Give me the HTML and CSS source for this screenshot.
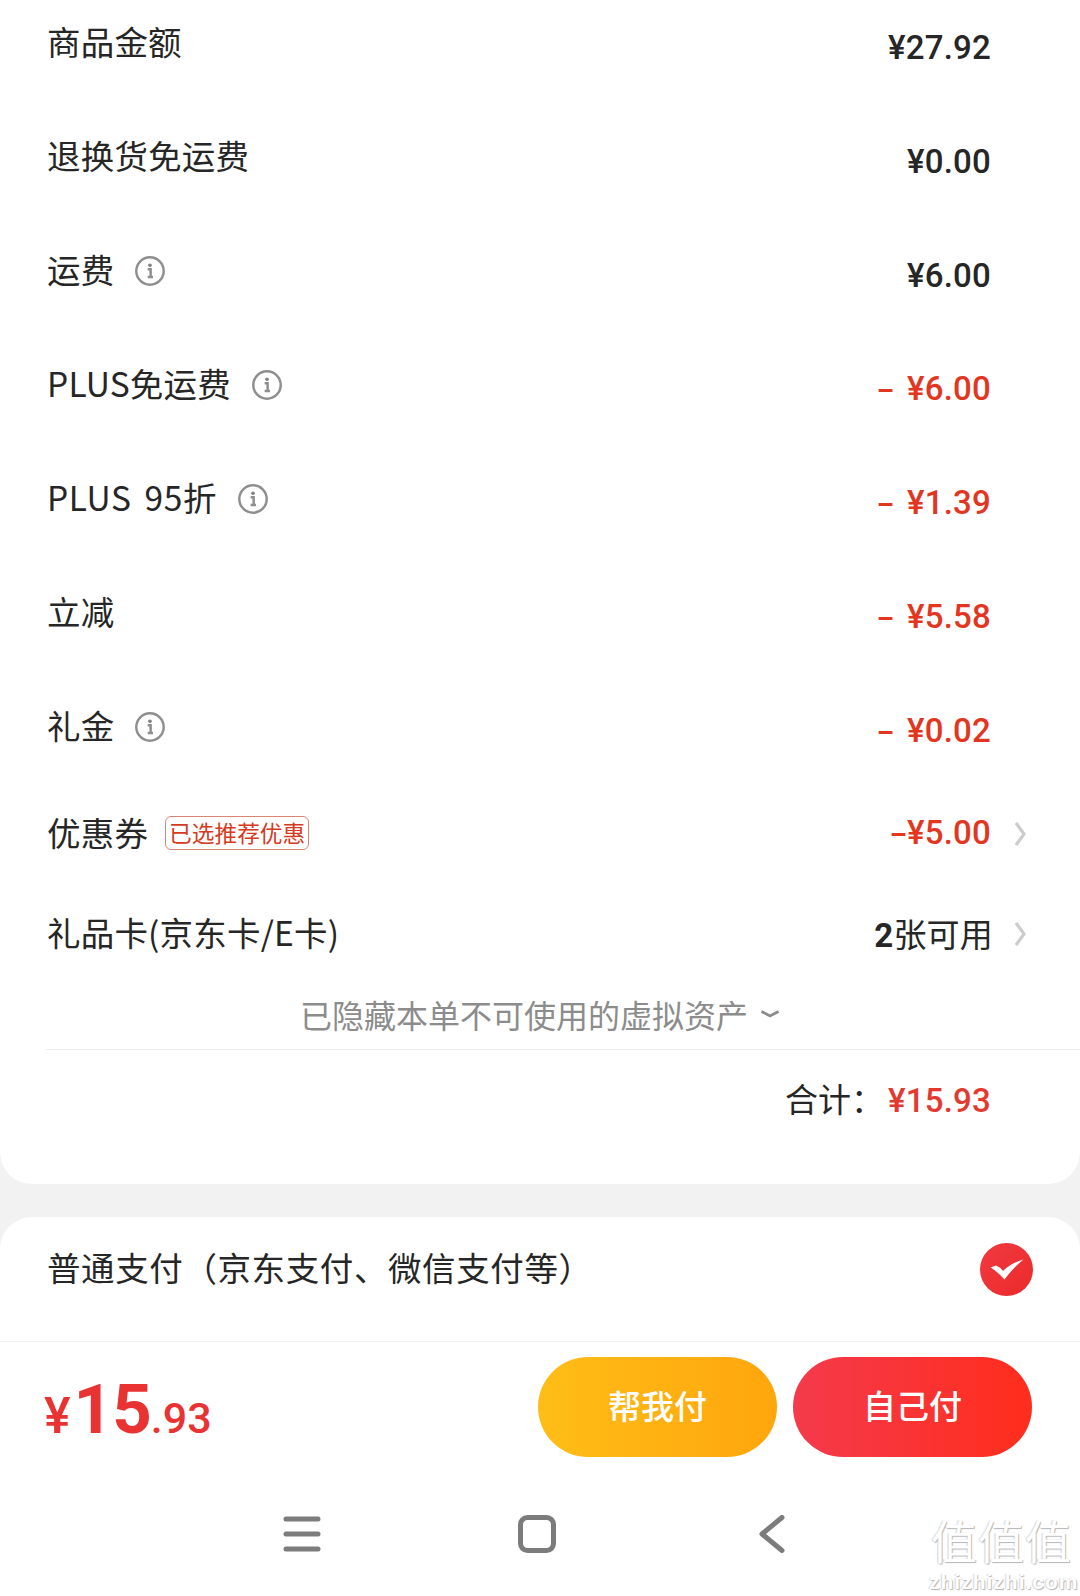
FILE: index.html
```html
<!DOCTYPE html>
<html lang="zh-CN">
  <head>
    <meta charset="UTF-8" />
    <meta name="viewport" content="width=device-width, initial-scale=1.0" />
    <title>订单金额</title>
    <link rel="stylesheet" href="styles.css">
  </head>
  <body>
    <section class="card summary">
      <div class="row"><span class="label">商品金额</span><span class="amount">¥27.92</span></div>
      <div class="row"><span class="label">退换货免运费</span><span class="amount">¥0.00</span></div>
      <div class="row">
        <span class="label">运费</span>
        <svg class="info" viewBox="0 0 28 28"><circle cx="14" cy="14" r="12.8"/><circle class="dot" cx="14" cy="8.6" r="1.7"/><path d="M11.8 12.4h2.8v7M11.8 19.6h5"/></svg>
        <span class="amount">¥6.00</span>
      </div>
      <div class="row">
        <span class="label">PLUS免运费</span>
        <svg class="info" viewBox="0 0 28 28"><circle cx="14" cy="14" r="12.8"/><circle class="dot" cx="14" cy="8.6" r="1.7"/><path d="M11.8 12.4h2.8v7M11.8 19.6h5"/></svg>
        <span class="amount red"><span class="minus">–</span>¥6.00</span>
      </div>
      <div class="row">
        <span class="label wide">PLUS 95折</span>
        <svg class="info" viewBox="0 0 28 28"><circle cx="14" cy="14" r="12.8"/><circle class="dot" cx="14" cy="8.6" r="1.7"/><path d="M11.8 12.4h2.8v7M11.8 19.6h5"/></svg>
        <span class="amount red"><span class="minus">–</span>¥1.39</span>
      </div>
      <div class="row"><span class="label">立减</span><span class="amount red"><span class="minus">–</span>¥5.58</span></div>
      <div class="row">
        <span class="label">礼金</span>
        <svg class="info" viewBox="0 0 28 28"><circle cx="14" cy="14" r="12.8"/><circle class="dot" cx="14" cy="8.6" r="1.7"/><path d="M11.8 12.4h2.8v7M11.8 19.6h5"/></svg>
        <span class="amount red"><span class="minus">–</span>¥0.02</span>
      </div>
      <div class="row row-link coupon">
        <span class="label">优惠券</span>
        <span class="tag">已选推荐优惠</span>
        <span class="amount red flat"><span class="minus tight">–</span>¥5.00</span>
        <svg class="chevron" viewBox="0 0 12 26"><path d="M2 2 10 13 2 24"/></svg>
      </div>
      <div class="row row-link gift">
        <span class="label">礼品卡(京东卡/E卡)</span>
        <span class="amount flat"><b>2</b><span class="plain">张可用</span></span>
        <svg class="chevron" viewBox="0 0 12 26"><path d="M2 2 10 13 2 24"/></svg>
      </div>
      <div class="hidden-note">
        已隐藏本单不可使用的虚拟资产
        <svg class="caret" viewBox="0 0 20 8"><path d="M1.500 1.500 10 6l8.500-4.500"/></svg>
      </div>
      <div class="total">
        <span class="total-label">合计：</span><span class="amount red flat">¥15.93</span>
      </div>
    </section>

    <section class="card pay">
      <span class="label pay-label">普通支付（京东支付、微信支付等）</span>
      <svg class="check" viewBox="0 0 53 53">
        <defs>
          <linearGradient id="checkFill" x1="0" y1="0" x2="1" y2="1">
            <stop offset="0" stop-color="#f03a40"/>
            <stop offset="1" stop-color="#ec2a2a"/>
          </linearGradient>
        </defs>
        <circle cx="26.500" cy="26.500" r="26.500" fill="url(#checkFill)"/>
        <path d="M10.500 24.500 16 22.500Q20 24 23 28 31 20 43.500 16.500 33 25 24.500 36.500 18 29 10.500 24.500Z" fill="#fff"/>
      </svg>
    </section>

    <footer class="bar">
      <div class="price"><span class="yen">¥</span><span class="whole">15</span><span class="cents">.93</span></div>
      <div class="actions">
        <button class="btn btn-help">帮我付</button>
        <button class="btn btn-self">自己付</button>
      </div>
    </footer>

    <nav class="nav">
      <svg class="nav-icon" viewBox="0 0 38 36"><path d="M3 3h32M3 18h32M3 33h32"/></svg>
      <svg class="nav-icon" viewBox="0 0 38 38"><rect x="2.500" y="2.500" width="33" height="33" rx="7"/></svg>
      <svg class="nav-icon" viewBox="0 0 26 38"><path d="M23 2.500 3 19l20 16.500"/></svg>
    </nav>

    <div class="watermark">
      <div class="wm-mark">值值值</div>
      <div class="wm-url">zhizhizhi.com</div>
    </div>
  </body>
</html>
```

FILE: styles.css
```css
html,
body {
  margin: 0;
  height: 1596px;
  overflow: hidden;
}
body {
  position: relative;
  display: flex;
  flex-direction: column;
  background-color: #f2f2f2;
  color: #262626;
  font-family: "Noto Sans CJK SC", Roboto, sans-serif;
}
svg {
  display: block;
  flex-shrink: 0;
}
.card {
  background-color: #fff;
}
.summary {
  margin-top: -14px;
  padding-bottom: 34px;
  border-radius: 0 0 32px 32px;
}
.row {
  display: flex;
  align-items: center;
  height: 114px;
  padding: 0 89px 0 47px;
}
.label {
  margin-bottom: 4px;
  font-size: 33.5px;
  letter-spacing: 0.2px;
  line-height: 40px;
  white-space: nowrap;
}
.label.wide {
  word-spacing: 5px;
  letter-spacing: 0.6px;
}
.info {
  width: 30px;
  height: 30px;
  margin-left: 21px;
  fill: none;
  stroke: #8f8f8f;
  stroke-width: 2.3;
}
.info .dot {
  fill: #808080;
  stroke: none;
}
.amount {
  margin-left: auto;
  padding-top: 10px;
  font-family: Roboto, "Noto Sans CJK SC", sans-serif;
  font-size: 33px;
  font-weight: 500;
  letter-spacing: 0.2px;
  line-height: 40px;
  white-space: nowrap;
}
.amount.flat {
  padding-top: 0;
}
.red {
  color: #e2361f;
}
.minus {
  margin-right: 13px;
  font-size: 27px;
  font-weight: 700;
}
.minus.tight {
  margin-right: 0;
}
.plain {
  font-family: "Noto Sans CJK SC", sans-serif;
  font-weight: 400;
}
.amount b {
  font-weight: 700;
}
.row-link {
  padding-right: 54px;
}
.coupon {
  height: 100px;
}
.gift {
  box-sizing: border-box;
  height: 102px;
  padding-bottom: 2px;
}
.row-link .amount {
  margin-right: 23px;
}
.gift .amount {
  margin-right: 21px;
}
.tag {
  margin: 0 0 2px 17px;
  padding: 0 3px;
  border: 1px solid #d98576;
  border-radius: 6px;
  color: #d63a22;
  font-size: 22.7px;
  line-height: 32px;
}
.chevron {
  width: 12px;
  height: 26px;
  fill: none;
  stroke: #cdcdcd;
  stroke-width: 3.2;
}
.hidden-note {
  display: flex;
  align-items: center;
  justify-content: center;
  gap: 12px;
  box-sizing: border-box;
  height: 64px;
  margin-left: 46px;
  padding: 0 46px 8px 0;
  border-bottom: 1px solid #ececec;
  color: #8c8c8c;
  font-size: 32px;
  line-height: 40px;
}
.caret {
  width: 20px;
  height: 8px;
  fill: none;
  stroke: #8c8c8c;
  stroke-width: 2.8;
}
.total {
  display: flex;
  align-items: center;
  justify-content: flex-end;
  height: 100px;
  padding-right: 89px;
}
.total-label {
  margin: 0 4px 4px 0;
  font-size: 33px;
  line-height: 40px;
}
.total .amount {
  margin: 2px 0 0;
  color: #e4392e;
}
.pay {
  display: flex;
  align-items: center;
  justify-content: space-between;
  box-sizing: border-box;
  height: 124px;
  margin-top: 33px;
  padding: 0 47px 20px 47px;
  border-radius: 32px 32px 0 0;
}
.pay-label {
  letter-spacing: 0.6px;
}
.check {
  width: 53px;
  height: 53px;
}
.bar {
  display: flex;
  align-items: center;
  justify-content: space-between;
  box-sizing: border-box;
  height: 131px;
  padding: 0 48px 0 44px;
  border-top: 1px solid #f2f2f2;
  background-color: #fff;
}
.price {
  display: flex;
  align-items: baseline;
  padding-top: 4px;
  color: #e93232;
  font-family: Roboto, sans-serif;
  font-weight: 500;
}
.yen {
  margin-right: 3px;
  font-size: 50px;
}
.whole {
  font-size: 69px;
  font-weight: 700;
  letter-spacing: -1px;
}
.cents {
  font-size: 43px;
}
.actions {
  display: flex;
  gap: 16px;
}
.btn {
  width: 239px;
  height: 100px;
  padding-bottom: 6px;
  border: none;
  border-radius: 50px;
  color: #fff;
  font-family: "Noto Sans CJK SC", sans-serif;
  font-size: 33px;
  font-weight: 500;
  cursor: pointer;
}
.btn-help {
  background: linear-gradient(90deg, #ffbd17, #ffa60d);
}
.btn-self {
  background: linear-gradient(90deg, #f43a4c, #ff2d1c);
}
.nav {
  display: flex;
  flex: 1;
  align-items: center;
  justify-content: center;
  gap: 197px;
  padding-right: 6px;
  background-color: #fff;
}
.nav-icon {
  width: 38px;
  height: 38px;
  fill: none;
  stroke: #7c7c7c;
  stroke-width: 5;
  stroke-linecap: round;
  stroke-linejoin: round;
}
.watermark {
  position: absolute;
  right: 6px;
  bottom: 2px;
  width: 145px;
  color: #fff;
  text-align: center;
  text-shadow: 1px 1px 1px #b5b5b5, -1px 0 1px #d5d5d5;
}
.wm-mark {
  margin-bottom: 6px;
  font-size: 46px;
  line-height: 50px;
  letter-spacing: 1px;
  white-space: nowrap;
}
.wm-url {
  font-family: "Liberation Sans", sans-serif;
  font-size: 21px;
  font-weight: 700;
  line-height: 24px;
  letter-spacing: 1px;
}
```
